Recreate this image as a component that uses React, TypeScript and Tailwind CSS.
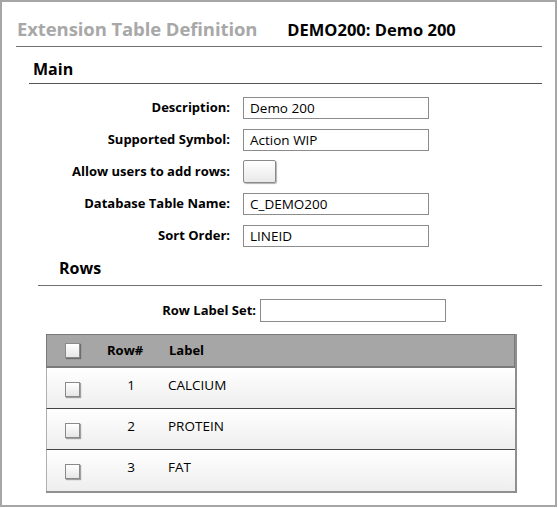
import React from "react";

type Field = { label: string; value?: string; kind?: "text" | "toggle" };

const fields: Field[] = [
  { label: "Description:", value: "Demo 200" },
  { label: "Supported Symbol:", value: "Action WIP" },
  { label: "Allow users to add rows:", kind: "toggle" },
  { label: "Database Table Name:", value: "C_DEMO200" },
  { label: "Sort Order:", value: "LINEID" },
];

const rows = [
  { num: 1, label: "CALCIUM" },
  { num: 2, label: "PROTEIN" },
  { num: 3, label: "FAT" },
];

// little raised checkbox, like the old web forms
function Check() {
  return (
    <span className="block w-[15px] h-[15px] border border-[#8a8a8a] bg-gradient-to-b from-white to-[#e6e6e6] shadow-[1px_1px_1px_rgba(0,0,0,0.35)]" />
  );
}

export default function App() {
  return (
    <div
      className="w-[557px] h-[507px] border-2 border-[#a6a6a6] bg-white text-black"
      style={{ fontFamily: '"Open Sans", "Noto Sans", sans-serif' }}
    >
      {/* Title */}
      <div className="ml-[14px] w-[526px] border-b border-[#707070] flex items-baseline pt-[13px] pb-[3px] pl-[1px]">
        <h1 className="text-[18.5px] font-bold text-[#a8a8a8] tracking-[-0.1px]">
          Extension Table Definition
        </h1>
        <span className="ml-[30px] text-[16.5px] font-bold">DEMO200: Demo 200</span>
      </div>

      {/* Main */}
      <div className="ml-[27px] w-[513px] border-b border-[#555] pt-[12px] pb-[4px] pl-[4px]">
        <h2 className="text-[16px] font-bold leading-[20px]">Main</h2>
      </div>

      <div className="mt-[13px] flex flex-col gap-[10px]">
        {fields.map((f) => (
          <div key={f.label} className="flex items-center h-[22px]">
            <label className="w-[229px] text-right text-[13px] font-bold pr-[1px]">
              {f.label}
            </label>
            {f.kind === "toggle" ? (
              <span className="ml-[12px] block w-[33px] h-[23px] border border-[#8a8a8a] rounded-[2px] bg-gradient-to-b from-white to-[#e9e9e9] shadow-[1px_1px_1px_rgba(0,0,0,0.3)]" />
            ) : (
              <div className="ml-[12px] w-[186px] h-[22px] border border-[#8c8c8c] flex items-center px-[6px] text-[13.5px]">
                {f.value}
              </div>
            )}
          </div>
        ))}
      </div>

      {/* Rows */}
      <div className="ml-[36px] w-[504px] border-b border-[#707070] mt-[11px] pb-[7px] pl-[21px]">
        <h2 className="text-[16px] font-bold leading-[20px]">Rows</h2>
      </div>

      <div className="flex items-center mt-[13px] h-[23px]">
        <label className="w-[254px] text-right text-[13px] font-bold">Row Label Set:</label>
        <div className="ml-[4px] w-[186px] h-[23px] border border-[#8c8c8c]" />
      </div>

      <div className="ml-[44px] mt-[12px] w-[471px] border-r-2 border-b-2 border-[#8f8f8f]">
        <div className="h-[34px] bg-[#a6a6a6] border border-[#7a7a7a] border-b-2 border-b-[#7a7a7a] flex items-center text-[13px] font-bold">
          <span className="ml-[18px]">
            <Check />
          </span>
          <span className="ml-[27px] w-[40px]">Row#</span>
          <span className="ml-[22px]">Label</span>
        </div>
        {rows.map((r, i) => (
          <div
            key={r.num}
            className={`h-[41px] flex bg-gradient-to-b from-white to-[#eeeeee] border-l border-[#b0b0b0] ${
              i < rows.length - 1 ? "border-b border-b-[#444]" : ""
            }`}
          >
            <span className="ml-[18px] mt-[14px]">
              <Check />
            </span>
            <span className="w-[55px] text-right text-[13.5px] mt-[7px]">{r.num}</span>
            <span className="ml-[33px] text-[13.5px] mt-[7px]">{r.label}</span>
          </div>
        ))}
      </div>
    </div>
  );
}
